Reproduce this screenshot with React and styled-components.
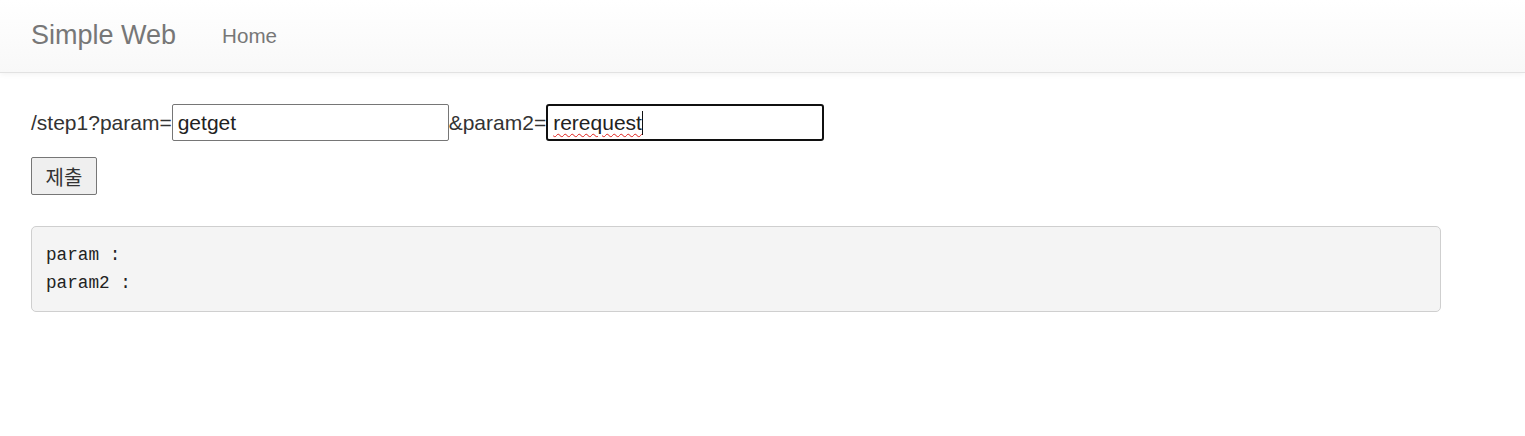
import React from "react";
import styled, { createGlobalStyle } from "styled-components";

const Global = createGlobalStyle`
  html, body { margin: 0; padding: 0; background: #fff; }
  body { font-family: "Liberation Sans", Arial, sans-serif; color: #333; }
`;

const Navbar = styled.nav`
  height: 72px;
  display: flex;
  align-items: center;
  padding-left: 31px;
  gap: 46px;
  background: linear-gradient(to bottom, #ffffff 0%, #f8f8f8 100%);
  border-bottom: 1px solid #e2e2e2;
  box-shadow: 0 1px 6px rgba(0, 0, 0, 0.06);
`;

const Brand = styled.a`
  font-size: 27px;
  color: #777;
  text-decoration: none;
  padding-bottom: 2px;
`;

const NavLink = styled.a`
  font-size: 20.6px;
  color: #777;
  text-decoration: none;
`;

const Main = styled.main`
  padding: 31px 31px 0 31px;
`;

const FormRow = styled.div`
  display: flex;
  align-items: center;
  font-size: 21px;
  color: #333;
`;

const Label = styled.span`
  white-space: nowrap;
`;

const Field = styled.div`
  box-sizing: border-box;
  width: ${(p) => (p.$focused ? 278 : 277)}px;
  height: 37px;
  display: flex;
  align-items: center;
  padding: 0 ${(p) => (p.$focused ? 5 : 5)}px;
  border: ${(p) => (p.$focused ? "2px solid #101010" : "1px solid #767676")};
  border-radius: ${(p) => (p.$focused ? 3 : 2)}px;
  font-size: 21px;
  color: #222;
  background: #fff;
`;

const Value = styled.span`
  text-decoration: ${(p) => (p.$misspelled ? "underline wavy #e0201b" : "none")};
  text-decoration-thickness: 1px;
  text-underline-offset: 3px;
`;

const Caret = styled.span`
  display: inline-block;
  width: 1px;
  height: 24px;
  background: #111;
  margin-left: 0px;
`;

const Submit = styled.button`
  margin-top: 16px;
  box-sizing: border-box;
  width: 66px;
  height: 38px;
  border: 1px solid #767676;
  border-radius: 2px;
  background: #efefef;
  font-family: "Noto Sans CJK KR", "Liberation Sans", sans-serif;
  font-size: 20px;
  color: #333;
  padding: 0;
  display: block;
`;

const Pre = styled.pre`
  margin: 31px 0 0 0;
  box-sizing: border-box;
  width: 1410px;
  padding: 14px;
  background: #f4f4f4;
  border: 1px solid #cfcfcf;
  border-radius: 5px;
  font-family: "Liberation Mono", "DejaVu Sans Mono", monospace;
  font-size: 17.7px;
  line-height: 28px;
  color: #222;
`;

export default function App() {
  return (
    <>
      <Global />
      <Navbar>
        <Brand href="#">Simple Web</Brand>
        <NavLink href="#">Home</NavLink>
      </Navbar>
      <Main>
        <FormRow>
          <Label>/step1?param=</Label>
          <Field>
            <Value>getget</Value>
          </Field>
          <Label>&amp;param2=</Label>
          <Field $focused>
            <Value $misspelled>rerequest</Value>
            <Caret />
          </Field>
        </FormRow>
        <Submit type="button">제출</Submit>
        <Pre>{"param : \nparam2 : "}</Pre>
      </Main>
    </>
  );
}
